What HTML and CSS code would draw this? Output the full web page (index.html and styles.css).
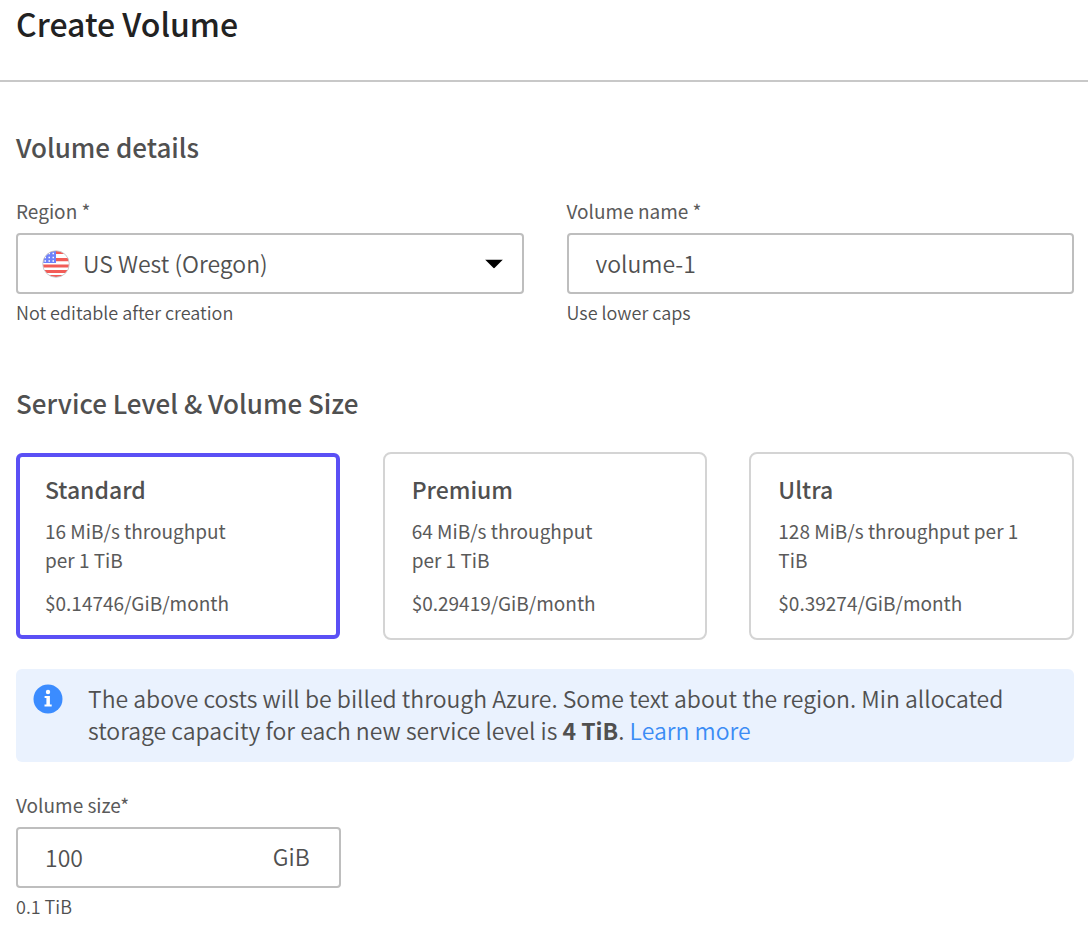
FILE: index.html
```html
<!DOCTYPE html>
<html lang="en">
<head>
<meta charset="utf-8">
<meta name="viewport" content="width=device-width, initial-scale=1">
<title>Create Volume</title>
<link rel="stylesheet" href="styles.css">
</head>
<body>
<header class="page-header">
  <h1 class="page-title">Create Volume</h1>
</header>
<main>
  <form class="volume-form">
    <section class="details">
      <h2 class="section-title">Volume details</h2>
      <div class="details-grid">
        <div class="field">
          <label class="label" for="region">Region *</label>
          <div class="control">
            <select class="box region-select" id="region" aria-describedby="region-help">
              <option selected>US West (Oregon)</option>
            </select>
            <svg class="flag" viewBox="0 0 28 28" aria-hidden="true">
              <defs><clipPath id="flag-round"><circle cx="14" cy="14" r="13"/></clipPath></defs>
              <g clip-path="url(#flag-round)">
                <rect width="28" height="28" fill="#fff"/>
                <path fill="#f25c57" d="M0 1h28v3H0zM0 8h28v3.200H0zM0 14.500h28v3H0zM0 20h28v3H0zM0 25h28v3H0z"/>
                <path fill="#6f82fa" d="M0 0h14v13H0z"/>
                <path stroke="#fff" stroke-width="1.300" stroke-dasharray="1.500 2.500" d="M2.500 3.500h11M2.500 7.500h11M2.500 11h11"/>
              </g>
              <circle cx="14" cy="14" r="13.300" fill="none" stroke="#bfbfc3" stroke-width=".8"/>
            </svg>
            <svg class="caret" viewBox="0 0 18 9" aria-hidden="true"><path d="M0 0h18L9 9z"/></svg>
          </div>
          <p class="help" id="region-help">Not editable after creation</p>
        </div>
        <div class="field">
          <label class="label" for="name">Volume name *</label>
          <input class="box" id="name" type="text" value="volume-1" aria-describedby="name-help">
          <p class="help" id="name-help">Use lower caps</p>
        </div>
      </div>
    </section>

    <section class="service">
      <h2 class="section-title" id="service-title">Service Level &amp; Volume Size</h2>
      <div class="columns levels" role="radiogroup" aria-labelledby="service-title">
        <label class="card">
          <input class="card-radio" type="radio" name="level" value="standard" checked>
          <span class="card-name">Standard</span>
          <span class="card-text">16 MiB/s throughput<br>per 1 TiB</span>
          <span class="card-text">$0.14746/GiB/month</span>
        </label>
        <label class="card">
          <input class="card-radio" type="radio" name="level" value="premium">
          <span class="card-name">Premium</span>
          <span class="card-text">64 MiB/s throughput<br>per 1 TiB</span>
          <span class="card-text">$0.29419/GiB/month</span>
        </label>
        <label class="card">
          <input class="card-radio" type="radio" name="level" value="ultra">
          <span class="card-name">Ultra</span>
          <span class="card-text">128 MiB/s throughput per 1 TiB</span>
          <span class="card-text">$0.39274/GiB/month</span>
        </label>
      </div>
      <div class="notice">
        <svg class="info" viewBox="0 0 30 30" aria-hidden="true">
          <circle cx="15" cy="15" r="14.500" fill="#3b8cff"/>
          <circle cx="15" cy="8" r="2.200" fill="#fff"/>
          <path fill="#fff" d="M11.600 12h5.300v8.500h1.800V22.500h-7.200v-2h1.900V14h-1.800z"/>
        </svg>
        <p class="notice-text">The above costs will be billed through Azure. Some text about the region. Min allocated storage capacity for each new service level is <strong>4 TiB</strong>. <a class="link" href="#">Learn more</a></p>
      </div>
      <div class="columns">
        <div class="field">
          <label class="label" for="size">Volume size*</label>
          <div class="control">
            <input class="box size-input" id="size" type="text" inputmode="numeric" value="100" aria-describedby="size-unit size-help">
            <span class="unit" id="size-unit">GiB</span>
          </div>
          <p class="help" id="size-help">0.1 TiB</p>
        </div>
      </div>
    </section>
  </form>
</main>
</body>
</html>
```

FILE: styles.css
```css
* { box-sizing: border-box; }

body {
  margin: 0;
  background: #fff;
  color: #505050;
  font-family: "Noto Sans CJK SC", "Noto Sans", sans-serif;
  font-size: 23px;
  font-weight: 350;
  line-height: 32px;
}

h1, h2, p { margin: 0; }

.page-header {
  padding: 2px 16px 36px;
  border-bottom: 2px solid #c8c8c8;
}

.page-title {
  color: #222;
  font-size: 32px;
  font-weight: 500;
  line-height: 42px;
}

.volume-form {
  display: flex;
  flex-direction: column;
  gap: 60px;
  padding: 47px 14px 16px 16px;
}

.section-title {
  color: #505050;
  font-size: 26px;
  font-weight: 500;
  line-height: 36px;
}

.details-grid {
  display: grid;
  grid-template-columns: 1fr 1fr;
  gap: 43px;
  margin-top: 32px;
}

.columns {
  display: grid;
  grid-template-columns: repeat(3, 1fr);
  gap: 42px;
}

.service {
  display: flex;
  flex-direction: column;
  gap: 29px;
}

.levels { margin-top: 2px; }

.field {
  display: flex;
  flex-direction: column;
}

.label {
  color: #5a5a5a;
  font-size: 19px;
  font-weight: 400;
  line-height: 28px;
  margin-bottom: 8px;
}

.control {
  display: grid;
  position: relative;
}

.box {
  width: 100%;
  height: 61px;
  padding: 0 27px 2px;
  border: 2px solid #bebebe;
  border-radius: 4px;
  background: #fff;
  color: #505050;
  font: inherit;
}

.region-select {
  appearance: none;
  padding: 0 60px 2px 65px;
}

.size-input { padding-right: 80px; }

.flag,
.caret {
  position: absolute;
  top: 50%;
  transform: translateY(-50%);
  pointer-events: none;
}

.flag {
  left: 26px;
  width: 28px;
  height: 28px;
}

.caret {
  right: 21px;
  width: 18px;
  height: 9px;
}

.unit {
  position: absolute;
  top: 13px;
  right: 31px;
  pointer-events: none;
}

.help {
  margin-top: 5px;
  font-size: 18px;
  line-height: 26px;
}

.card {
  display: flex;
  flex-direction: column;
  gap: 14px;
  position: relative;
  padding: 22px 46px 23px 29px;
}

.card-radio {
  appearance: none;
  position: absolute;
  inset: 0;
  margin: 0;
  border: 2px solid #d4d4d4;
  border-radius: 8px;
}

.card-radio:checked {
  inset: 1px 1px 1px 0;
  border: 4px solid #5b50f5;
  border-radius: 6px;
}

.card-name {
  color: #505050;
  font-weight: 500;
  line-height: 30px;
  margin-bottom: -2px;
}

.card-text {
  color: #5a5a5a;
  font-size: 19px;
  font-weight: 400;
  line-height: 29px;
}

.notice {
  display: flex;
  gap: 25px;
  padding: 13px 18px 16px 17px;
  border-radius: 6px;
  background: #eaf2fe;
}

.info {
  flex: none;
  width: 30px;
  height: 30px;
  margin-top: 2px;
}

.notice-text { max-width: 920px; }

.link {
  color: #3b8cf5;
  text-decoration: none;
}
```
